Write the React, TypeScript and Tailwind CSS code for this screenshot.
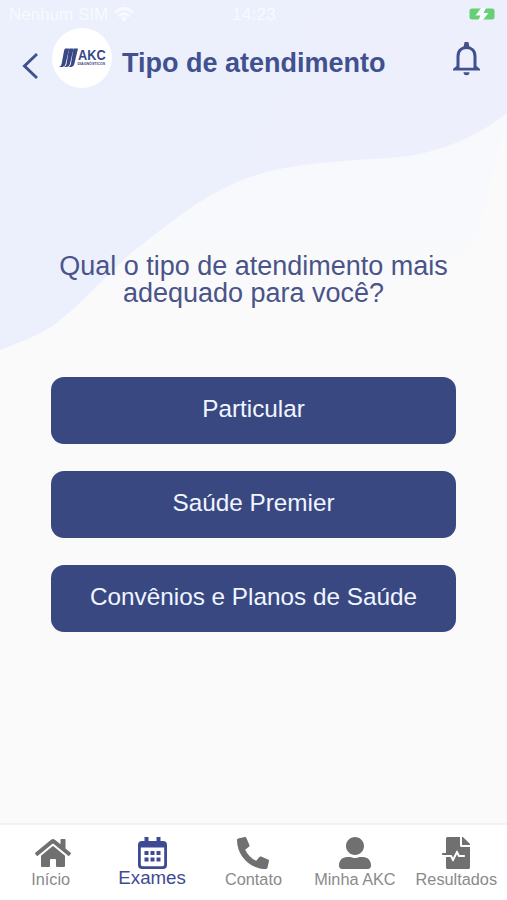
import type { ReactNode } from "react";
import { FaFileMedicalAlt, FaHome, FaPhoneAlt, FaUserAlt } from "react-icons/fa";

const options = ["Particular", "Saúde Premier", "Convênios e Planos de Saúde"];

type Tab = { label: string; icon: ReactNode; active?: boolean };

const tabs: Tab[] = [
  { label: "Início", icon: <FaHome className="ml-[5px] h-[36px] w-[36px]" /> },
  { label: "Exames", icon: <CalendarIcon />, active: true },
  { label: "Contato", icon: <FaPhoneAlt className="h-[32px] w-[32px]" /> },
  { label: "Minha AKC", icon: <FaUserAlt className="h-[32px] w-[32px]" /> },
  { label: "Resultados", icon: <FaFileMedicalAlt className="h-[32px] w-[32px]" /> }
];

function CalendarIcon() {
  return (
    <svg className="mt-[2px] h-[32px] w-[29px]" viewBox="0 0 29 32" fill="currentColor">
      <path d="M6.500 0h4v4h8V0h4v4H25q4 0 4 4v20q0 4-4 4H4q-4 0-4-4V8q0-4 4-4h2.500ZM2.800 10.500V27.500q0 1.700 1.700 1.700h20q1.700 0 1.700-1.700v-17Z" fillRule="evenodd" />
      <path d="M6.500 14h4v4h-4ZM12.500 14h4v4h-4ZM18.500 14h4v4h-4ZM6.500 20.500h4v4h-4ZM12.500 20.500h4v4h-4ZM18.500 20.500h4v4h-4Z" />
    </svg>
  );
}

function Waves() {
  return (
    <svg className="absolute inset-0 -z-10 h-full w-full" viewBox="0 0 507 900" preserveAspectRatio="none">
      <defs>
        <linearGradient id="soft" x1="0" y1="0" x2="0" y2="1">
          <stop offset="0" stopColor="#f7f8fd" />
          <stop offset="0.5" stopColor="#f8f9fd" />
          <stop offset="0.85" stopColor="#fafafa" />
        </linearGradient>
        <linearGradient id="wave" x1="0" y1="0.3" x2="1" y2="0.6">
          <stop offset="0" stopColor="#ebf0fc" />
          <stop offset="1" stopColor="#eeeffc" />
        </linearGradient>
      </defs>
      <path d="M0 0H507V125C492 160 490 200 478 235C440 300 340 290 240 300C120 312 50 330 0 395Z" fill="url(#soft)" />
      <path d="M0 0H507V113C480 134 445 152 400 157C350 161 310 162 270 171C215 185 180 215 130 254C100 282 80 305 54 325C35 337 18 343 0 350Z" fill="url(#wave)" />
    </svg>
  );
}

function StatusBar() {
  return (
    <div className="flex h-[28px] items-center text-[17px] leading-none text-[#f8faff]">
      <div className="flex flex-1 items-center gap-[6px] pl-[9px]">
        <span>Nenhum SIM</span>
        <svg className="h-[15px] w-[20px]" viewBox="0 0 20 15" fill="none" stroke="currentColor" strokeWidth="3">
          <path d="M1 5.500q9-8 18 0M4.500 9q5.500-4.500 11 0" />
          <path d="M6.500 11q3.500-3 7 0L10 15Z" fill="currentColor" stroke="none" />
        </svg>
      </div>
      <span className="pl-[4px] tracking-[0.3px]">14:23</span>
      <div className="flex flex-1 justify-end pr-[12px]">
        <svg className="h-[12px] w-[26px]" viewBox="0 0 26 12">
          <rect x="0.5" y="0.5" width="25" height="11" rx="2.5" fill="#68cf75" />
          <path d="M12 0 6.500 7.500h5L9.500 12h4.500l5.500-7h-5L17 0Z" fill="#f4faff" />
        </svg>
      </div>
    </div>
  );
}

function Logo() {
  return (
    <div className="flex h-[60px] w-[60px] shrink-0 items-center justify-center rounded-full bg-white text-[#3a4787]">
      <svg className="h-[20px] w-[19px] shrink-0" viewBox="0 0 19 20" fill="currentColor">
        <path d="M6.200.5h4L6.500 16q-.6 2.800-3 3H0q2-.5 2.600-3L5 3q.3-2 1.200-2.500Z" />
        <path d="M10.600.5h4L10.900 16q-.6 2.800-3 3H4.900q2-.5 2.600-3L9.600 3q.2-2 1-2.500Z" />
        <path d="M15 .5h4L15.300 16q-.6 2.800-3 3H9.300q2-.5 2.600-3L14 3q.2-2 1-2.500Z" />
      </svg>
      <div className="mb-[2px] flex w-[28px] shrink-0 flex-col gap-px font-bold">
        <span className="origin-left scale-x-[0.91] text-[14px] leading-[13px]">AKC</span>
        <span className="text-[3.600px] leading-[3px]">DIAGNÓSTICOS</span>
      </div>
    </div>
  );
}

function Header() {
  return (
    <header className="flex h-[60px] items-center pl-[22px] pr-[27px] text-[#41508f]">
      <svg className="mr-[14px] mt-[15px] h-[28px] w-[16px]" viewBox="0 0 16 28" fill="none" stroke="currentColor" strokeWidth="3">
        <path d="M15 2 2.500 14 15 26" />
      </svg>
      <Logo />
      <h1 className="ml-[10px] mt-[11px] flex-1 whitespace-nowrap text-[27px] font-bold leading-none">Tipo de atendimento</h1>
      <svg className="mt-[2px] h-[34px] w-[27px]" viewBox="0 0 27 34">
        <path d="M5 27V14.500C5 8.500 8.500 5.500 13.500 5.500S22 8.500 22 14.500V27" fill="none" stroke="currentColor" strokeWidth="3" />
        <path d="M0 28.500V27l3.500-3H6v1.800h15V24h2.500L27 27v1.500ZM10.500 5l.8-3.500a2.200 2.200 0 0 1 4.400 0l.8 3.500ZM10.500 30.200h6a3 3 0 0 1-6 0Z" fill="currentColor" />
      </svg>
    </header>
  );
}

export default function App() {
  return (
    <div className="relative isolate flex h-[900px] w-full flex-col overflow-hidden bg-[#fafafa] font-['Liberation_Sans',Arial,sans-serif]">
      <Waves />
      <StatusBar />
      <Header />

      <main className="flex flex-1 flex-col items-center pt-[165px]">
        <h2 className="text-center text-[27px] leading-[27px] text-[#4a5488]">
          Qual o tipo de atendimento mais
          <br />
          adequado para você?
        </h2>
        <div className="mt-[69.500px] flex w-[405px] flex-col gap-[27px]">
          {options.map((option) => (
            <button key={option} className="h-[67.200px] rounded-[13px] bg-[#3a4882] pb-[2px] text-[24.300px] leading-none text-[#f0f6ff]">
              {option}
            </button>
          ))}
        </div>
      </main>

      {/* Bottom tabs */}
      <nav className="grid h-[77px] shrink-0 grid-cols-5 border-t-2 border-[#f2f2f2] bg-white">
        {tabs.map((tab) => (
          <div
            key={tab.label}
            className={`flex flex-col items-center whitespace-nowrap pt-[10px] leading-none ${
              tab.active ? "text-[18.700px] text-[#3e4b94]" : "text-[16.300px] text-[#8a8a8a]"
            }`}
          >
            <div className={`flex items-center ${tab.active ? "h-[34px]" : "h-[36px] text-[#707070]"}`}>{tab.icon}</div>
            <span>{tab.label}</span>
          </div>
        ))}
      </nav>
    </div>
  );
}
